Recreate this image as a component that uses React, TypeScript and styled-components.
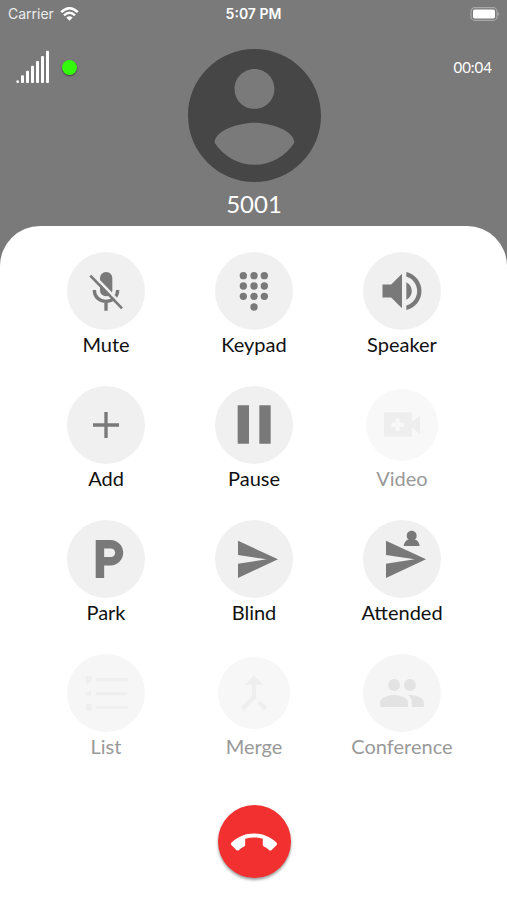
import React from "react";
import styled, { createGlobalStyle } from "styled-components";

const GlobalStyle = createGlobalStyle`
  * { box-sizing: border-box; }
  body { margin: 0; background: #7a7a7a; }
`;

const Screen = styled.main`
  display: flex;
  flex-direction: column;
  min-height: 100vh;
  background: #7a7a7a;
  color: #fff;
  font-family: Lato, "Noto Sans", sans-serif;
`;

const StatusBar = styled.div`
  display: grid;
  grid-template-columns: 1fr auto 1fr;
  align-items: center;
  height: 28px;
  padding: 0 8px;
  font-family: Inter, sans-serif;
  font-size: 14px;
  line-height: 16px;
`;

const Carrier = styled.div`
  display: flex;
  align-items: center;
  gap: 6px;
  color: #ececec;
`;

const Clock = styled.time`
  font-weight: 600;
`;

const BatterySlot = styled.div`
  display: flex;
  justify-content: flex-end;
`;

const CallHeader = styled.header`
  display: grid;
  grid-template-columns: 1fr auto 1fr;
  padding: 21px 15px 8px 16px;
`;

const SignalGroup = styled.div`
  display: flex;
  align-items: center;
  gap: 12px;
  height: 36px;
`;

const StatusDot = styled.span`
  width: 15px;
  height: 15px;
  border-radius: 50%;
  background: #33fa0a;
  box-shadow: 0 1px 2px rgba(0, 0, 0, 0.5);
`;

const Caller = styled.div`
  display: flex;
  flex-direction: column;
  align-items: center;
  gap: 8px;
`;

const CallerName = styled.h1`
  margin: 0;
  font-size: 24px;
  line-height: 28px;
  font-weight: 400;
`;

const Duration = styled.time`
  justify-self: end;
  font-size: 15px;
  line-height: 36px;
`;

const Sheet = styled.section`
  flex: 1;
  display: flex;
  flex-direction: column;
  align-items: center;
  padding: 26px 31px 20px 32px;
  border-radius: 40px 40px 0 0;
  background: #fff;
`;

const ActionGrid = styled.div`
  display: grid;
  grid-template-columns: repeat(3, 1fr);
  row-gap: 28px;
  width: 100%;
`;

const ActionButton = styled.button`
  display: flex;
  flex-direction: column;
  align-items: center;
  padding: 0;
  border: 0;
  background: none;
  color: #111;
  font-family: inherit;
  font-size: 20px;
  line-height: 28px;
  cursor: pointer;

  &:disabled {
    color: #999;
    cursor: default;
  }
`;

const Disc = styled.span<{ $tone: string; $ink: string; $small?: boolean }>`
  display: flex;
  width: ${(p) => (p.$small ? 72 : 78)}px;
  height: ${(p) => (p.$small ? 72 : 78)}px;
  margin: ${(p) => (p.$small ? 3 : 0)}px;
  align-items: center;
  justify-content: center;
  border-radius: 50%;
  background: ${(p) => p.$tone};
  color: ${(p) => p.$ink};
`;

const Glyph = styled.svg`
  flex: none;
  width: 78px;
  height: 78px;
  fill: currentColor;
`;

const HangUpButton = styled.button`
  display: flex;
  align-items: center;
  justify-content: center;
  width: 73px;
  height: 73px;
  margin-top: 45px;
  padding: 0;
  border: 0;
  border-radius: 50%;
  background: #f23030;
  box-shadow: 0 2px 3px rgba(0, 0, 0, 0.4);
  cursor: pointer;
`;

type Action = {
  label: string;
  icon: React.ReactNode;
  disabled?: boolean;
  tone?: string;
  ink?: string;
  small?: boolean;
};

const sendShape = "M-48 -55L72 1L-48 57V14L38 1L-48 -12Z";

const actions: Action[] = [
  {
    label: "Mute",
    icon: (
      <>
        <rect x="-18" y="-57" width="37" height="73" rx="18" />
        <path
          d="M-35 -3C-35 18 -20 31 0 31S35 18 35 -3M0 31V59"
          fill="none"
          stroke="currentColor"
          strokeWidth="10"
        />
        <path d="M-36 -46L50 43" stroke="#f0f0f0" strokeWidth="8" />
        <path d="M-47 -46L48 52" stroke="currentColor" strokeWidth="8" />
      </>
    ),
  },
  {
    label: "Keypad",
    icon: (
      <>
        {[-46, -15, 16].map((y) =>
          [-32, 0, 31].map((x) => <circle key={`${x},${y}`} cx={x} cy={y} r="11" />)
        )}
        <circle cx="0" cy="48" r="11" />
      </>
    ),
  },
  {
    label: "Speaker",
    icon: (
      <path
        transform="scale(6.5) translate(-12 -12)"
        d="M3 9v6h4l5 5V4L7 9H3zm13.5 3c0-1.77-1.02-3.29-2.5-4.03v8.05c1.48-.73 2.5-2.25 2.5-4.02zM14 3.23v2.06c2.89.86 5 3.54 5 6.71s-2.11 5.85-5 6.71v2.06c4.01-.91 7-4.49 7-8.77s-2.99-7.86-7-8.77z"
      />
    ),
  },
  { label: "Add", icon: <path d="M-5 -39H5V-5H39V5H5V39H-5V5H-39V-5H-5Z" /> },
  { label: "Pause", icon: <path d="M-49 -59H-15V56H-49ZM16 -59H50V56H16Z" /> },
  {
    label: "Video",
    disabled: true,
    small: true,
    tone: "#f8f8f8",
    ink: "#eeeeee",
    icon: (
      <path
        fillRule="evenodd"
        d="M-54 -38H30V-10L54 -28V26L30 8V35H-54ZM-19 -20V-7H-32V5H-19V18H-7V5H6V-7H-7V-20Z"
      />
    ),
  },
  {
    label: "Park",
    icon: (
      <path
        transform="translate(-69 -76) scale(6.35)"
        d="M13 3H6v18h4v-6h3c3.31 0 6-2.69 6-6s-2.69-6-6-6zm.2 8H10V7h3.2c1.1 0 2 .9 2 2s-.9 2-2 2z"
      />
    ),
  },
  { label: "Blind", icon: <path d={sendShape} /> },
  {
    label: "Attended",
    icon: (
      <>
        <path d={sendShape} />
        <circle cx="29" cy="-70" r="15" />
        <path d="M5 -39Q6 -51 16 -58H42Q52 -51 53 -39Z" />
      </>
    ),
  },
  {
    label: "List",
    disabled: true,
    tone: "#f6f6f6",
    ink: "#efefef",
    icon: (
      <path d="M-30 -45H67V-35H-30ZM-30 -3H64V7H-30ZM-30 38H67V48H-30ZM-60 -51H-43V-38L-53 -26H-60ZM-64 2L-44 -8V12ZM-60 33H-43V53H-60Z" />
    ),
  },
  {
    label: "Merge",
    disabled: true,
    small: true,
    tone: "#f7f7f7",
    ink: "#eeeeee",
    icon: (
      <path
        transform="scale(6.2) translate(-12 -12)"
        d="M17 20.41L18.41 19 15 15.59 13.59 17 17 20.41zM7.5 8H11v5.59L5.59 19 7 20.41l6-6V8h3.5L12 3.5 7.5 8z"
      />
    ),
  },
  {
    label: "Conference",
    disabled: true,
    tone: "#f5f5f5",
    ink: "#e3e3e3",
    icon: (
      <path
        transform="scale(5.95) translate(-12 -12)"
        d="M16 11c1.66 0 2.99-1.34 2.99-3S17.66 5 16 5c-1.66 0-3 1.34-3 3s1.34 3 3 3zm-8 0c1.66 0 2.99-1.34 2.99-3S9.66 5 8 5C6.34 5 5 6.34 5 8s1.34 3 3 3zm0 2c-2.33 0-7 1.17-7 3.5V19h14v-2.5c0-2.33-4.67-3.5-7-3.5zm8 0c-.29 0-.62.02-.97.05 1.16.84 1.97 1.97 1.97 3.45V19h6v-2.5c0-2.33-4.67-3.5-7-3.5z"
      />
    ),
  },
];

const signalTops = [76, 62, 47, 33, 18, 2];

const WifiIcon = () => (
  <svg width="19" height="14" viewBox="0 0 19 14" fill="none" stroke="#fff" strokeWidth="2.5" aria-hidden="true">
    <path d="M1.2 5.2Q9.5 -2.6 17.8 5.2" />
    <path d="M4 8.3Q9.5 3.2 15 8.3" />
    <path d="M9.5 13.8L6.3 10.5Q9.5 8 12.7 10.5Z" fill="#fff" stroke="none" />
  </svg>
);

const BatteryIcon = () => (
  <svg width="30" height="14" viewBox="0 0 30 14" aria-hidden="true">
    <rect x="2" y="0.7" width="26" height="12.6" rx="3.8" fill="none" stroke="#a8a8a8" strokeWidth="1.2" />
    <rect x="4" y="2.5" width="22" height="9" rx="1.8" fill="#fff" />
    <path d="M28.8 4.8Q31 7 28.8 9.2Z" fill="#b4b4b4" />
  </svg>
);

const SignalIcon = () => (
  <svg width="34" height="34" viewBox="0 0 102 102" fill="#fff" aria-hidden="true">
    <circle cx="5" cy="95" r="4" />
    {signalTops.map((top, i) => (
      <rect key={top} x={15 + i * 15} y={top} width="9" height={99 - top} rx="3" />
    ))}
  </svg>
);

const AvatarIcon = () => (
  <svg width="133" height="133" viewBox="2 2 20 20" fill="#464646" aria-hidden="true">
    <path d="M12 2C6.48 2 2 6.48 2 12s4.48 10 10 10 10-4.48 10-10S17.52 2 12 2zm0 3c1.66 0 3 1.34 3 3s-1.34 3-3 3-3-1.34-3-3 1.34-3 3-3zm0 14.4c-2.5 0-4.71-1.38-6-3.32.03-1.99 4-3 6-3 1.99 0 5.97 1.01 6 3-1.29 1.94-3.5 3.32-6 3.32z" />
  </svg>
);

const HangUpIcon = () => (
  <svg width="46" height="46" viewBox="0 -0.6 24 24" fill="#fff" aria-hidden="true">
    <path d="M12 9c-1.6 0-3.15.25-4.6.72v3.1c0 .39-.23.74-.56.9-.98.49-1.87 1.12-2.66 1.85-.18.18-.43.28-.7.28-.28 0-.53-.11-.71-.29L.29 13.08c-.18-.17-.29-.42-.29-.7 0-.28.11-.53.29-.71C3.34 8.78 7.46 7 12 7s8.66 1.78 11.71 4.67c.18.18.29.43.29.71 0 .28-.11.53-.29.71l-2.48 2.48c-.18.18-.43.29-.71.29-.27 0-.52-.11-.7-.28-.79-.74-1.69-1.36-2.67-1.85-.33-.16-.56-.5-.56-.9v-3.1C15.15 9.25 13.6 9 12 9z" />
  </svg>
);

export default function App() {
  return (
    <Screen>
      <GlobalStyle />
      <StatusBar>
        <Carrier>
          Carrier
          <WifiIcon />
        </Carrier>
        <Clock>5:07 PM</Clock>
        <BatterySlot>
          <BatteryIcon />
        </BatterySlot>
      </StatusBar>
      <CallHeader>
        <SignalGroup>
          <SignalIcon />
          <StatusDot />
        </SignalGroup>
        <Caller>
          <AvatarIcon />
          <CallerName>5001</CallerName>
        </Caller>
        <Duration>00:04</Duration>
      </CallHeader>
      <Sheet>
        <ActionGrid>
          {actions.map((a) => (
            <ActionButton key={a.label} type="button" disabled={a.disabled}>
              <Disc $tone={a.tone ?? "#f0f0f0"} $ink={a.ink ?? "#797979"} $small={a.small}>
                <Glyph viewBox="-117 -117 234 234" aria-hidden="true">
                  {a.icon}
                </Glyph>
              </Disc>
              {a.label}
            </ActionButton>
          ))}
        </ActionGrid>
        <HangUpButton type="button" aria-label="End call">
          <HangUpIcon />
        </HangUpButton>
      </Sheet>
    </Screen>
  );
}
